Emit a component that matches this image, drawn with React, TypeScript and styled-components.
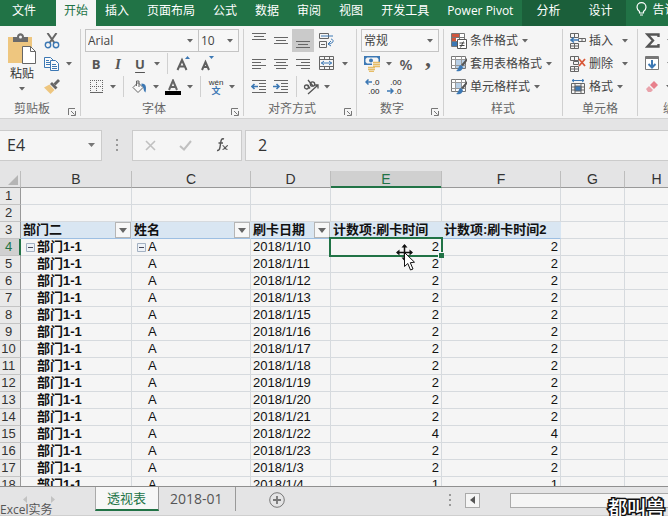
import React from 'react';
import styled, { createGlobalStyle, css } from 'styled-components';

const UI = '"Open Sans", "Noto Sans CJK SC", sans-serif';
const GRID = '"Liberation Sans", "Noto Sans CJK SC", sans-serif';
const GREEN = '#217346';
const GRAY = '#666';
const BLUE = '#3c78b4';

const GlobalStyle = createGlobalStyle`
  *, *::before, *::after { box-sizing: border-box; }
  body { margin: 0; background: #f5f5f5; font: 12px/16px ${UI}; color: #444; overflow: hidden; }
  button, input, select { font: inherit; color: inherit; margin: 0; padding: 0; border: 0; background: none; border-radius: 0; outline: none; }
  svg { display: block; flex: none; }
`;

const Window = styled.div`
  position: relative;
  display: flex;
  flex-direction: column;
  height: 100vh;
  overflow: hidden;
`;

/* ---------- ribbon tabs ---------- */

const TabBar = styled.nav`
  display: flex;
  flex: none;
  height: 26px;
  background: ${GREEN};
  color: #fff;
  overflow: hidden;
`;

const RibbonTab = styled.button<{ $kind?: 'file' | 'active' | 'context' }>`
  flex: none;
  padding: 0 9px 5px;
  white-space: nowrap;
  ${p => p.$kind === 'file' && css`padding: 0 20px 5px 12px;`}
  ${p => p.$kind === 'active' && css`padding: 0 8px 5px; background: #f5f5f5; color: ${GREEN};`}
  ${p => p.$kind === 'context' && css`padding: 0 14px 5px; background: #1b5f3a;`}
`;

const TellMe = styled.button`
  display: flex;
  flex: none;
  gap: 5px;
  padding: 2px 0 0 10px;
`;

/* ---------- ribbon ---------- */

const Ribbon = styled.div`
  display: flex;
  flex: none;
  height: 93px;
  padding-top: 3px;
  background: #f5f5f5;
  border-bottom: 1px solid #d2d2d2;
  overflow: hidden;
`;

const Group = styled.section<{ $w: number }>`
  position: relative;
  display: flex;
  flex-direction: column;
  flex: none;
  width: ${p => p.$w}px;
  height: 87px;
  border-right: 1px solid #d0d0d0;
`;

const GroupBody = styled.div<{ $pad: number }>`
  display: flex;
  flex: none;
  flex-direction: column;
  height: 69px;
  padding-left: ${p => p.$pad}px;
`;

const Row = styled.div`
  display: flex;
  align-items: center;
  height: 23px;
`;

const GroupFoot = styled.div<{ $launch?: boolean }>`
  flex: none;
  height: 18px;
  padding-top: 3px;
  padding-right: ${p => (p.$launch ? 16 : 0)}px;
  text-align: center;
  color: ${GRAY};
  white-space: nowrap;
`;

const Launcher = styled.button`
  position: absolute;
  right: 4px;
  bottom: 0;
`;

const Tool = styled.button<{ $w?: number; $on?: boolean }>`
  display: flex;
  align-items: center;
  justify-content: center;
  flex: none;
  width: ${p => p.$w ?? 22}px;
  height: 23px;
  background: ${p => (p.$on ? '#cacaca' : 'transparent')};
`;

const Glyph = styled.span<{ $style: 'b' | 'i' | 'u' | 'percent' | 'comma' }>`
  font-size: 13px;
  font-weight: 700;
  color: #555;
  ${p => p.$style === 'i' && css`font-family: "Liberation Serif", serif; font-size: 15px; font-style: italic;`}
  ${p => p.$style === 'u' && css`text-decoration: underline; text-underline-offset: 3px;`}
  ${p => p.$style === 'percent' && css`font-size: 15px; font-weight: 600;`}
  ${p => p.$style === 'comma' && css`font-family: "Liberation Serif", serif; font-size: 24px; padding-bottom: 12px;`}
`;

const Divider = styled.i<{ $l?: number; $r?: number }>`
  flex: none;
  width: 1px;
  height: 21px;
  margin: 0 ${p => p.$r ?? 3}px 0 ${p => p.$l ?? 3}px;
  background: #d0d0d0;
`;

const Combo = styled.label<{ $w: number; $joined?: boolean }>`
  display: flex;
  align-items: center;
  flex: none;
  width: ${p => p.$w}px;
  height: 23px;
  margin-left: ${p => (p.$joined ? -1 : 0)}px;
  padding: 0 5px 0 2px;
  border: 1px solid #c4c4c4;
  background: #f7f7f7;
  select { flex: 1; min-width: 0; appearance: none; }
`;

const PasteArea = styled.div`
  display: flex;
  gap: 7px;
`;

const PasteButton = styled.button`
  display: flex;
  flex-direction: column;
  align-items: center;
  width: 30px;
  padding-top: 4px;
  color: #333;
  span { line-height: 18px; margin-bottom: 4px; }
`;

const TextTool = styled.button<{ $gap?: number }>`
  display: flex;
  align-items: center;
  gap: 3px;
  height: 23px;
  color: #444;
  white-space: nowrap;
  span { margin-right: ${p => p.$gap ?? 1}px; }
`;

/* ---------- formula bar ---------- */

const FormulaBar = styled.div`
  display: flex;
  align-items: center;
  flex: none;
  height: 52px;
  background: #e4e4e5;
`;

const Box = styled.div<{ $w?: number }>`
  display: flex;
  align-items: center;
  flex: ${p => (p.$w ? 'none' : '1')};
  width: ${p => (p.$w ? `${p.$w}px` : 'auto')};
  min-width: 0;
  height: 31px;
  border: 1px solid #cbcbcb;
  background: #f5f5f5;
  font-size: 16px;
  color: #333;
`;

const NameBox = styled(Box)`
  border-left: 0;
  padding: 0 6px 0 7px;
  input { flex: 1; min-width: 0; }
`;

const Dots = styled.div`
  display: flex;
  justify-content: center;
  flex: none;
  width: 30px;
`;

const FormulaTools = styled(Box)`
  justify-content: space-around;
  margin-right: 3px;
`;

const FormulaInput = styled(Box)`
  border-right: 0;
  padding-left: 12px;
  input { width: 100%; }
`;

/* ---------- sheet ---------- */

const Sheet = styled.main`
  flex: 1;
  min-height: 0;
  overflow: hidden;
  background: #f5f5f5;
`;

const Grid = styled.table`
  table-layout: fixed;
  width: 100%;
  border-collapse: separate;
  border-spacing: 0;
  font: 13px/16px ${GRID};
  color: #111;
`;

const Col = styled.col<{ $w: number }>`
  width: ${p => p.$w}px;
`;

const ColHead = styled.th<{ $on?: boolean }>`
  height: 17px;
  padding: 0;
  font-size: 14px;
  font-weight: 400;
  line-height: 16px;
  color: ${p => (p.$on ? GREEN : '#333')};
  background: ${p => (p.$on ? '#d0d0d0' : '#e4e4e5')};
  border-right: 1px solid #bdbdbd;
  border-bottom: 1px solid ${p => (p.$on ? GREEN : '#999')};
  box-shadow: ${p => (p.$on ? `inset 0 -1px ${GREEN}` : 'none')};
`;

const CornerMark = styled.svg`
  margin: 1px 0 0 8px;
`;

const RowHead = styled.th<{ $on?: boolean }>`
  height: 17px;
  padding: 0 3px 0 0;
  text-align: center;
  font-weight: 400;
  color: ${p => (p.$on ? GREEN : '#333')};
  background: ${p => (p.$on ? '#d0d0d0' : '#e9e9e9')};
  border-right: 1px solid ${p => (p.$on ? GREEN : '#999')};
  border-bottom: 1px solid #c4c4c4;
  box-shadow: ${p => (p.$on ? `inset -1px 0 ${GREEN}` : 'none')};
`;

const Cell = styled.td<{ $head?: boolean; $bold?: boolean; $num?: boolean }>`
  position: relative;
  height: 17px;
  padding: 0 2px;
  white-space: nowrap;
  border-right: 1px solid #d6dade;
  border-bottom: 1px solid #d6dade;
  text-align: ${p => (p.$num ? 'right' : 'left')};
  font-weight: ${p => (p.$bold || p.$head ? 700 : 400)};
  ${p => p.$head && css`
    background: #d9e6f2;
    border-right-color: #d9e6f2;
    border-bottom-color: #9dbfe2;
    padding: 0 0 0 2px;
  `}
`;

const HeadContent = styled.div`
  display: flex;
  align-items: center;
  justify-content: space-between;
  height: 16px;
`;

const FilterButton = styled.button`
  display: flex;
  align-items: center;
  justify-content: center;
  width: 16px;
  height: 16px;
  background: #f7f7f7;
  border: 1px solid #b5b5b5;
`;

const Outline = styled.div<{ $open?: boolean }>`
  display: flex;
  align-items: center;
  gap: 2px;
  height: 16px;
  padding-left: ${p => (p.$open ? 3 : 14)}px;
`;

const Selection = styled.div`
  position: absolute;
  inset: -2px;
  border: 2px solid ${GREEN};
  z-index: 1;
  &::after {
    content: '';
    position: absolute;
    right: -3px;
    bottom: -3px;
    width: 6px;
    height: 6px;
    background: ${GREEN};
    border-top: 1px solid #f5f5f5;
    border-left: 1px solid #f5f5f5;
  }
`;

const Pointer = styled.svg`
  position: absolute;
  left: 65px;
  top: 5px;
  z-index: 2;
`;

/* ---------- bottom bar ---------- */

const BottomBar = styled.footer`
  display: flex;
  flex: none;
  height: 30px;
  border-top: 1px solid #8f8f8f;
  border-bottom: 1px solid #cfcfcf;
  background: #e4e4e5;
`;

const SheetNav = styled.div`
  display: flex;
  flex: none;
  gap: 23px;
  width: 95px;
  padding: 9px 0 0 23px;
`;

const SheetTab = styled.button<{ $active?: boolean }>`
  flex: none;
  height: 24px;
  padding: 0 12px 0 11px;
  font-size: ${p => (p.$active ? 13 : 14)}px;
  line-height: 22px;
  color: ${p => (p.$active ? GREEN : '#555')};
  border-right: 1px solid #999;
  ${p => p.$active && css`
    background: #f7f7f7;
    border-bottom: 2px solid ${GREEN};
    border-left: 1px solid #aaa;
  `}
`;

const AddSheet = styled.button`
  height: 26px;
  margin-left: 33px;
`;

const Scroll = styled.div`
  display: flex;
  align-items: center;
  width: 33%;
  height: 26px;
  margin-left: auto;
`;

const ScrollDots = styled.div`
  flex: none;
  width: 17px;
  padding-left: 1px;
`;

const ScrollArrow = styled.button`
  display: flex;
  align-items: center;
  justify-content: center;
  flex: none;
  width: 15px;
  height: 15px;
  margin-right: 30px;
  border: 1px solid #aaa;
  background: #f5f5f5;
`;

const Thumb = styled.div`
  flex: 1;
  height: 15px;
  border: 1px solid #aaa;
  border-right: 0;
  background: #f5f5f5;
`;

const Caption = styled.div`
  position: absolute;
  left: 0;
  bottom: -3px;
  line-height: 18px;
  color: #555;
`;

const Brand = styled.div`
  position: absolute;
  right: 3px;
  bottom: -1px;
  font: 500 19px/20px "Noto Sans CJK SC", sans-serif;
  color: #fff;
  -webkit-text-stroke: 3px #111;
  paint-order: stroke fill;
`;

/* ---------- icons ---------- */

const Arrow = () => (
  <svg width="6" height="4" viewBox="0 0 6 4"><path d="M0 0h6L3 3.5z" fill="#666" /></svg>
);
const ArrowTool = ({ w, label }: { w: number; label: string }) => (
  <Tool $w={w} aria-label={label}><Arrow /></Tool>
);
const LaunchIcon = () => (
  <svg width="8" height="8" viewBox="0 0 8 8" fill="none" stroke="#777"><path d="M.5 7V.5H7M3 3l3.5 3.5M7.5 3v4.5H3" /></svg>
);
const Bulb = () => (
  <svg width="11" height="16" viewBox="0 0 11 16" fill="none" stroke="#fff"><path d="M3.500 11V9.500C2 8.300 1 7 1 5.200a4.500 4.500 0 0 1 9 0C10 7 9 8.300 7.500 9.500V11zM4 13h3" strokeWidth="1.200" /></svg>
);
const PasteIcon = () => (
  <svg width="30" height="32" viewBox="0 0 30 32">
    <path d="M1 4h24v26H1z" fill="#eec67f" />
    <path d="M6 9V4h4c0-5 7-5 7 0h4v5z" fill="#6b6b6b" /><circle cx="13.500" cy="4" r="1.500" fill="#f5f5f5" />
    <path d="M15.500 13.500h8l5 5v12h-13z" fill="#fff" stroke="#666" /><path d="M23.500 13.500v5h5" fill="none" stroke="#666" />
  </svg>
);
const Scissors = () => (
  <svg width="16" height="16" viewBox="0 0 16 16" fill="none">
    <path d="M3.500 0l7 10M12.500 0L5.500 10" stroke="#666" strokeWidth="2" />
    <circle cx="4" cy="12" r="2.700" stroke={BLUE} strokeWidth="1.400" /><circle cx="12" cy="12" r="2.700" stroke={BLUE} strokeWidth="1.400" />
  </svg>
);
const Copy = () => (
  <svg width="16" height="14" viewBox="0 0 16 14" fill="#fafafa" stroke={BLUE}>
    <path d="M.5.5h6l3 3v7h-9zM2 3.500h3M2 5.500h4M2 7.500h4" />
    <path d="M6.500 3.500h5l3 3v7h-8zM8 7.500h4M8 9.500h5M8 11.500h5" />
  </svg>
);
const Brush = () => (
  <svg width="16" height="15" viewBox="0 0 16 15">
    <path d="M0 8.500l5.500-3 5 5.500-4 4z" fill="#eec67f" />
    <path d="M6 5l2-2 5.500 5.500-2 2z" fill="#666" /><path d="M9.500 4.500L14 0l2 2-4.500 4.500z" fill="#666" />
  </svg>
);
const SizeIcon = ({ up }: { up?: boolean }) => (
  <svg width="16" height="17" viewBox="0 0 16 17">
    <path d={up ? 'M2.500 15L7 5l4.500 10M4.500 11.500h5' : 'M3 15l3.500-8L10 15M4.500 12h4'} fill="none" stroke="#5f5f5f" strokeWidth="2" />
    <path d={up ? 'M10 4l2.500-3L15 4z' : 'M10 1h5l-2.500 3z'} fill={BLUE} />
  </svg>
);
const BorderIcon = () => (
  <svg width="13" height="13" viewBox="0 0 13 13" fill="none" stroke="#666">
    <path d="M0 .5h13M.5 0v12M12.500 0v12M6.500 0v12M0 6.500h13" strokeDasharray="1 1" /><path d="M0 12.500h13" />
  </svg>
);
const Bucket = () => (
  <svg width="15" height="14" viewBox="0 0 15 14">
    <path d="M6 2.500l5 5-5 5-5-5z" fill="#fafafa" stroke="#666" /><path d="M4.500 6V1h2.500v6" fill="none" stroke="#666" /><path d="M9.500 3.500c5 0 5 4 4 9-2.500-1.500-1-5-4-7z" fill={BLUE} />
  </svg>
);
const FontColor = () => (
  <svg width="16" height="16" viewBox="0 0 16 16"><path d="M4 11L8 1.500l4 9.500M5.500 8h5" fill="none" stroke="#666" strokeWidth="2" /><path d="M0 12h16v4H0z" fill="#000" /></svg>
);
const Phonetic = styled.span`
  display: flex;
  flex-direction: column;
  align-items: center;
  font: 8px/9px ${GRID};
  color: #333;
  b { font-size: 9px; line-height: 9px; color: ${BLUE}; }
`;
const Lines = ({ rows }: { rows: [number, number, number][] }) => (
  <svg width="16" height="16" viewBox="0 0 16 16" stroke="#666"><path d={rows.map(([x, y, w]) => `M${x} ${y}.500h${w}`).join('')} /></svg>
);
const Wrap = () => (
  <svg width="16" height="16" viewBox="0 0 16 16" fill="none" stroke="#666">
    <path d="M.5.5h9v5h-9zM.5 8.500h7v6h-7zM2 11.500h4" /><path d="M2 3h12M9 11c5 0 7-4 3-5M12 8l-3 3 3 2" stroke={BLUE} />
  </svg>
);
const Merge = () => (
  <svg width="16" height="15" viewBox="0 0 16 15" fill="none" stroke="#666">
    <path d="M.5.5h14v13H.5zM.5 3.500h14M.5 10.500h14M5.500 1v2M10.500 1v2M5.500 11v2M10.500 11v2" /><path d="M2 7h11M5 5L2.500 7 5 9M10 5l2.500 2L10 9" stroke={BLUE} />
  </svg>
);
const Indent = ({ right }: { right?: boolean }) => (
  <svg width="16" height="14" viewBox="0 0 16 14" fill="none">
    <path d="M1 .5h14M8 3.500h7M8 6.500h7M8 9.500h7M1 12.500h14" stroke="#666" />
    <path d={right ? 'M0 6.500h6M3.500 4L6 6.500 3.500 9' : 'M7 6.500H1M3.500 4L1 6.500 3.500 9'} stroke={BLUE} strokeWidth="1.600" />
  </svg>
);
const Rotate = () => (
  <svg width="17" height="16" viewBox="0 0 17 16" fill="none" stroke="#555" strokeWidth="1.300">
    <circle cx="3.500" cy="8" r="2" /><path d="M4.500 6l2.500 3.500M5 1l5 6" /><circle cx="9.500" cy="5" r="2.200" /><path d="M5 15l10-9M11.500 6H15v3.500" />
  </svg>
);
const Currency = () => (
  <svg width="17" height="16" viewBox="0 0 17 16">
    <path d="M0 0h16v9H0z" fill={BLUE} /><path d="M3 1.500h10l1.500 1.500v3L13 7.500H3L1.500 6V3z" fill="#f5f5f5" /><circle cx="7" cy="4.500" r="2" fill={BLUE} />
    <path d="M8 6h8v6h-4v3H4v-5h4z" fill="#f5f5f5" />
    <path d="M9 6.500h7M9 8.500h7M9 10.500h7M4 11.500h7M4 13.500h7M5 15.500h5" stroke="#e6bd68" strokeWidth="1.300" />
  </svg>
);
const Decimals = styled.span`
  display: flex;
  flex-direction: column;
  align-items: flex-end;
  font: 8px/9px ${GRID};
  color: #222;
  span { display: flex; align-items: center; gap: 1px; height: 9px; }
`;
const SmallArrow = ({ right }: { right?: boolean }) => (
  <svg width="7" height="6" viewBox="0 0 7 6" fill="none" stroke={BLUE} strokeWidth="1.500"><path d={right ? 'M0 3h6M3.500.5L6 3 3.500 5.500' : 'M7 3H1M3.500.5L1 3l2.500 2.500'} /></svg>
);
const CondFormat = () => (
  <svg width="16" height="16" viewBox="0 0 16 16"><path d="M.5.5h13v13H.5z" fill="#fff" stroke="#777" />
    <path d="M1 1h7v3H1zM1 5h4v3H1z" fill="#cf553d" /><path d="M1 9h5v4H1z" fill={BLUE} /><path d="M8.500 1v5M1 4.500h13M1 8.500h6" stroke="#777" />
    <path d="M6.500 6.500h9v9h-9z" fill="#fff" stroke="#555" /><path d="M8.500 10h5M8.500 12.500h5M9.500 14.500l3-6" stroke="#444" fill="none" /></svg>
);
const TableStyle = ({ single }: { single?: boolean }) => (
  <svg width="16" height="16" viewBox="0 0 16 16"><path d="M.5.5h14v12H.5z" fill="#fff" stroke="#777" />
    <path d={single ? 'M4 4h7v6H4z' : 'M5 4h9v8H5z'} fill="#b8cfe5" /><path d="M.5 3.500h14M.5 9.500h14M4.500.5v12M10.500.5v12" fill="none" stroke="#999" />
    <path d="M16 2v3l-4 5-2-1z" fill="#555" /><path d="M10 9l2 2c-1 4-3 5-7 4 3-2 2-5 5-6z" fill={BLUE} /></svg>
);
const CellIcon = ({ kind }: { kind: 'insert' | 'delete' | 'format' }) => (
  <svg width="16" height="16" viewBox="0 0 16 16" fill="none" stroke="#666">
    {kind === 'format' ? (
      <><path d="M1.500 4.500h13v10h-13zM1 8h14M1 11h14M5 4v11M11 4v11" /><path d="M5 7h6v5H5z" fill={BLUE} /><path d="M2 1.500h12M4 0L2 1.500 4 3M12 0l2 1.500L12 3" stroke={BLUE} /></>
    ) : (
      <><path d="M.5.5h8v4h-8zM4.500.5v4M.5 10.500h8v5h-8zM4.500 10.500v5M.5 13h8" />
        {kind === 'insert' ? <><path d="M8.500 5.500h7v3h-7zM12 5.500v3" /><path d="M9 7H1M4 4.500L1 7l3 2.500" stroke={BLUE} strokeWidth="1.500" /></> : <><path d="M3.500 5.500h5v3h-5z" /><path d="M9 3l6 7M15 3L9 10" stroke="#d95737" strokeWidth="1.800" /></>}</>
    )}
  </svg>
);
const Sigma = () => (
  <svg width="15" height="15" viewBox="0 0 15 15"><path d="M13.500 4V1.500H2.500L8 7.500l-5.500 6h11V11" fill="none" stroke="#555" strokeWidth="2.400" /></svg>
);
const Fill = () => (
  <svg width="15" height="15" viewBox="0 0 15 15" fill="none"><path d="M.5.5h13v13H.5z" fill="#fff" stroke="#777" /><path d="M1 2h12" stroke="#777" strokeWidth="2" /><path d="M7 4v7M3.500 8L7 11.500 10.500 8" stroke={BLUE} strokeWidth="2" /></svg>
);
const Eraser = () => (
  <svg width="14" height="12" viewBox="0 0 14 12"><path d="M9 0l4 4-4 4-4-4z" fill="#e8808c" /><path d="M4 5l4 4-2 2H3L1 8z" fill="#e9a3ab" /></svg>
);
const VerticalDots = () => (
  <svg width="3" height="12" viewBox="0 0 3 12" fill="#999"><path d="M0 0h2v2H0zM0 5h2v2H0zM0 10h2v2H0z" /></svg>
);

/* ---------- data ---------- */

const tabs = ['插入', '页面布局', '公式', '数据', '审阅', '视图', '开发工具', 'Power Pivot'];
const dates = [10, 11, 12, 13, 15, 16, 17, 18, 19, 20, 21, 22, 23, 3, 4];
const countFor = (day: number) => (day === 22 ? 4 : day === 4 ? 1 : 2);
const columns: [string, number][] = [['B', 111], ['C', 119], ['D', 80], ['E', 111], ['F', 119], ['G', 64], ['H', 64]];
const pivotHeads = ['部门二', '姓名', '刷卡日期', '计数项:刷卡时间', '计数项:刷卡时间2'];

const Foot = ({ text, launch }: { text: string; launch?: boolean }) => (
  <>
    <GroupFoot $launch={launch}>{text}</GroupFoot>
    {launch && <Launcher aria-label={`${text}设置`}><LaunchIcon /></Launcher>}
  </>
);

const Toggle = () => (
  <svg width="9" height="9" viewBox="0 0 9 9"><path d="M.5.5h8v8h-8z" fill="#eef2f7" stroke="#a3b1c2" /><path d="M2 4.500h5" stroke="#445" /></svg>
);
const ToggleButton = styled.button`
  flex: none;
  width: 9px;
  height: 9px;
`;

export default function App() {
  return (
    <Window>
      <GlobalStyle />
      <TabBar>
        <RibbonTab $kind="file">文件</RibbonTab>
        <RibbonTab $kind="active">开始</RibbonTab>
        {tabs.map(t => <RibbonTab key={t}>{t}</RibbonTab>)}
        <RibbonTab $kind="context">分析</RibbonTab>
        <RibbonTab $kind="context">设计</RibbonTab>
        <TellMe><Bulb />告诉我</TellMe>
      </TabBar>

      <Ribbon>
        <Group $w={81}>
          <GroupBody $pad={7}>
            <PasteArea>
              <PasteButton><PasteIcon /><span>粘贴</span><Arrow /></PasteButton>
              <div>
                <Row><Tool $w={16} aria-label="剪切"><Scissors /></Tool></Row>
                <Row><Tool $w={16} aria-label="复制"><Copy /></Tool><ArrowTool w={18} label="复制选项" /></Row>
                <Row><Tool $w={16} aria-label="格式刷"><Brush /></Tool></Row>
              </div>
            </PasteArea>
          </GroupBody>
          <Foot text="剪贴板" launch />
        </Group>

        <Group $w={163}>
          <GroupBody $pad={4}>
            <Row>
              <Combo $w={114}><select aria-label="字体"><option>Arial</option></select><Arrow /></Combo>
              <Combo $w={41} $joined><select aria-label="字号"><option>10</option></select><Arrow /></Combo>
            </Row>
            <Row>
              <Tool><Glyph $style="b">B</Glyph></Tool>
              <Tool><Glyph $style="i">I</Glyph></Tool>
              <Tool><Glyph $style="u">U</Glyph></Tool>
              <ArrowTool w={12} label="下划线选项" />
              <Divider $l={4} />
              <Tool $w={24} aria-label="增大字号"><SizeIcon up /></Tool>
              <Tool $w={24} aria-label="减小字号"><SizeIcon /></Tool>
            </Row>
            <Row>
              <Tool aria-label="边框"><BorderIcon /></Tool>
              <ArrowTool w={12} label="边框选项" />
              <Divider $l={4} $r={4} />
              <Tool aria-label="填充颜色"><Bucket /></Tool>
              <ArrowTool w={12} label="填充选项" />
              <Tool aria-label="字体颜色"><FontColor /></Tool>
              <ArrowTool w={12} label="颜色选项" />
              <Divider $l={4} $r={4} />
              <Tool><Phonetic>wén<b>文</b></Phonetic></Tool>
              <ArrowTool w={10} label="拼音选项" />
            </Row>
          </GroupBody>
          <Foot text="字体" launch />
        </Group>

        <Group $w={113}>
          <GroupBody $pad={4}>
            <Row>
              <Tool aria-label="顶端对齐"><Lines rows={[[1, 0, 14], [3, 3, 10], [1, 6, 14]]} /></Tool>
              <Tool aria-label="垂直居中"><Lines rows={[[1, 4, 14], [3, 7, 10], [1, 10, 14]]} /></Tool>
              <Tool $on aria-label="底端对齐"><Lines rows={[[1, 8, 14], [3, 11, 10], [1, 14, 14]]} /></Tool>
              <Tool $w={26} aria-label="自动换行"><Wrap /></Tool>
            </Row>
            <Row>
              <Tool aria-label="左对齐"><Lines rows={[[1, 3, 14], [1, 6, 9], [1, 9, 14], [1, 12, 9]]} /></Tool>
              <Tool aria-label="居中"><Lines rows={[[1, 3, 14], [3, 6, 10], [1, 9, 14], [3, 12, 10]]} /></Tool>
              <Tool aria-label="右对齐"><Lines rows={[[1, 3, 14], [6, 6, 9], [1, 9, 14], [6, 12, 9]]} /></Tool>
              <Tool $w={26} aria-label="合并后居中"><Merge /></Tool>
              <ArrowTool w={10} label="合并选项" />
            </Row>
            <Row>
              <Tool aria-label="减少缩进量"><Indent /></Tool>
              <Tool aria-label="增加缩进量"><Indent right /></Tool>
              <Divider $l={4} />
              <Tool aria-label="方向"><Rotate /></Tool>
              <ArrowTool w={10} label="方向选项" />
            </Row>
          </GroupBody>
          <Foot text="对齐方式" launch />
        </Group>

        <Group $w={87}>
          <GroupBody $pad={4}>
            <Row><Combo $w={78}><select aria-label="数字格式"><option>常规</option></select><Arrow /></Combo></Row>
            <Row>
              <Tool aria-label="会计数字格式"><Currency /></Tool>
              <ArrowTool w={12} label="货币选项" />
              <Tool><Glyph $style="percent">%</Glyph></Tool>
              <Tool><Glyph $style="comma">,</Glyph></Tool>
            </Row>
            <Row>
              <Tool><Decimals><span><SmallArrow />.0</span><span>.00</span></Decimals></Tool>
              <Tool><Decimals><span>.00</span><span><SmallArrow right />.0</span></Decimals></Tool>
            </Row>
          </GroupBody>
          <Foot text="数字" launch />
        </Group>

        <Group $w={119}>
          <GroupBody $pad={7}>
            <TextTool><CondFormat /><span>条件格式</span><Arrow /></TextTool>
            <TextTool><TableStyle /><span>套用表格格式</span><Arrow /></TextTool>
            <TextTool><TableStyle single /><span>单元格样式</span><Arrow /></TextTool>
          </GroupBody>
          <Foot text="样式" />
        </Group>

        <Group $w={75}>
          <GroupBody $pad={7}>
            <TextTool $gap={6}><CellIcon kind="insert" /><span>插入</span><Arrow /></TextTool>
            <TextTool $gap={6}><CellIcon kind="delete" /><span>删除</span><Arrow /></TextTool>
            <TextTool><CellIcon kind="format" /><span>格式</span><Arrow /></TextTool>
          </GroupBody>
          <Foot text="单元格" />
        </Group>

        <Group $w={75}>
          <GroupBody $pad={7}>
            <TextTool><Sigma /><span /><Arrow /></TextTool>
            <TextTool><Fill /><span /><Arrow /></TextTool>
            <TextTool><Eraser /><span /><Arrow /></TextTool>
          </GroupBody>
          <Foot text="编辑" />
        </Group>
      </Ribbon>

      <FormulaBar>
        <NameBox $w={102}>
          <input aria-label="名称框" defaultValue="E4" />
          <svg width="7" height="4" viewBox="0 0 7 4"><path d="M0 0h7L3.500 4z" fill="#777" /></svg>
        </NameBox>
        <Dots><VerticalDots /></Dots>
        <FormulaTools $w={110}>
          <button aria-label="取消"><svg width="11" height="11" viewBox="0 0 11 11"><path d="M1 1l9 9M10 1l-9 9" stroke="#c0c0c0" strokeWidth="1.600" /></svg></button>
          <button aria-label="输入"><svg width="13" height="11" viewBox="0 0 13 11"><path d="M1 6l4 3.500L12 1" fill="none" stroke="#c0c0c0" strokeWidth="2" /></svg></button>
          <button aria-label="插入函数"><svg width="13" height="14" viewBox="0 0 13 14" fill="none" stroke="#555"><path d="M8 1C5 0 5 3 4.500 6S4 13 1 12.500M2.500 5H7" strokeWidth="1.400" /><path d="M6.500 7.500c2 0 2 4 5 4M12 7.500c-2 0-3 4-5.500 4" strokeWidth="1.200" /></svg></button>
        </FormulaTools>
        <FormulaInput><input aria-label="编辑栏" defaultValue="2" /></FormulaInput>
      </FormulaBar>

      <Sheet>
        <Grid>
          <colgroup><Col $w={21} />{columns.map(([n, w]) => <Col key={n} $w={w} />)}</colgroup>
          <thead>
            <tr>
              <ColHead><CornerMark width="10" height="10" viewBox="0 0 10 10"><path d="M10 0v10H0z" fill="#b5b5b5" /></CornerMark></ColHead>
              {columns.map(([n]) => <ColHead key={n} $on={n === 'E'}>{n}</ColHead>)}
            </tr>
          </thead>
          <tbody>
            {[1, 2].map(r => <tr key={r}><RowHead>{r}</RowHead>{columns.map(([n]) => <Cell key={n} />)}</tr>)}
            <tr>
              <RowHead>3</RowHead>
              {pivotHeads.map((h, i) => (
                <Cell key={h} $head>
                  <HeadContent>{h}{i < 3 && <FilterButton aria-label={`筛选${h}`}><svg width="8" height="5" viewBox="0 0 8 5"><path d="M0 0h8L4 5z" fill="#666" /></svg></FilterButton>}</HeadContent>
                </Cell>
              ))}
              <Cell /><Cell />
            </tr>
            {dates.map((d, i) => (
              <tr key={d}>
                <RowHead $on={i === 0}>{i + 4}</RowHead>
                <Cell $bold><Outline $open={i === 0}>{i === 0 && <ToggleButton aria-label="折叠部门"><Toggle /></ToggleButton>}部门1-1</Outline></Cell>
                <Cell><Outline $open={i === 0}>{i === 0 && <ToggleButton aria-label="折叠姓名"><Toggle /></ToggleButton>}A</Outline></Cell>
                <Cell>2018/1/{d}</Cell>
                <Cell $num>
                  {countFor(d)}
                  {i === 0 && (
                    <>
                      <Selection />
                      <Pointer width="20" height="28" viewBox="0 0 20 28">
                        <path d="M8.500 1v15M1 8.500h15" stroke="#111" strokeWidth="1.500" />
                        <path d="M8.500 0L5.500 3.500h6zM8.500 17l-3-3.500h6zM0 8.500l3.500-3v6zM17 8.500l-3.500-3v6z" fill="#111" />
                        <path d="M8.500 8.500v14l3.300-3 2.700 6.500 2.500-1-2.700-6.300 4.200-.5z" fill="#fff" stroke="#111" />
                      </Pointer>
                    </>
                  )}
                </Cell>
                <Cell $num>{countFor(d)}</Cell>
                <Cell /><Cell />
              </tr>
            ))}
          </tbody>
        </Grid>
      </Sheet>

      <BottomBar>
        <SheetNav>
          <svg width="5" height="8" viewBox="0 0 5 8"><path d="M4 0v7L0 3.500z" fill="#c2c2c2" /></svg>
          <svg width="5" height="8" viewBox="0 0 5 8"><path d="M0 0v7l4-3.500z" fill="#c2c2c2" /></svg>
        </SheetNav>
        <SheetTab $active>透视表</SheetTab>
        <SheetTab>2018-01</SheetTab>
        <AddSheet aria-label="新建工作表"><svg width="16" height="16" viewBox="0 0 16 16" fill="none" stroke="#777"><circle cx="8" cy="8" r="7.300" /><path d="M8 4v8M4 8h8" strokeWidth="1.800" /></svg></AddSheet>
        <Scroll>
          <ScrollDots><VerticalDots /></ScrollDots>
          <ScrollArrow aria-label="向左滚动"><svg width="5" height="8" viewBox="0 0 5 8"><path d="M5 0v8L0 4z" fill="#555" /></svg></ScrollArrow>
          <Thumb />
        </Scroll>
      </BottomBar>
      <Caption>Excel实务</Caption>
      <Brand>都叫兽</Brand>
    </Window>
  );
}
